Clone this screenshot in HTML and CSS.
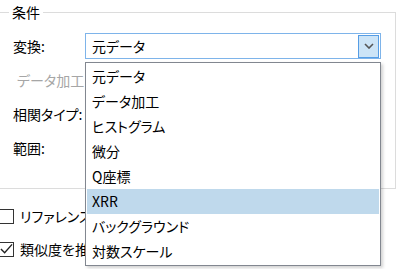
FILE: index.html
```html
<!DOCTYPE html>
<html lang="ja">

<head>
    <meta charset="UTF-8">
    <meta name="viewport" content="width=device-width, initial-scale=1.0">
    <title>条件</title>
    <link rel="stylesheet" href="styles.css">
</head>

<body>
    <div class="panel">
        <fieldset class="group">
            <legend>条件</legend>
            <div class="row">
                <span class="label">変換:</span>
                <div class="combo">
                    <span class="combo-value">元データ</span>
                    <span class="combo-btn">
                        <svg width="10" height="6" viewBox="0 0 10 6">
                            <polyline points="1,1 5,5 9,1" fill="none" stroke="#555" stroke-width="1.6" />
                        </svg>
                    </span>
                </div>
            </div>
            <div class="row">
                <span class="label disabled">データ加工</span>
            </div>
            <div class="row">
                <span class="label">相関タイプ:</span>
            </div>
            <div class="row">
                <span class="label">範囲:</span>
            </div>
        </fieldset>

        <div class="checks">
            <label class="check">
                <span class="box"></span>
                <span>リファレンス</span>
            </label>
            <label class="check">
                <span class="box">
                    <svg width="14" height="12" viewBox="0 0 14 12">
                        <polyline points="1,6 5,10 13,1" fill="none" stroke="#202020" stroke-width="1.5" />
                    </svg>
                </span>
                <span>類似度を推</span>
            </label>
        </div>

        <!-- opened list of the 変換 combo -->
        <ul class="dropdown">
            <li>元データ</li>
            <li>データ加工</li>
            <li>ヒストグラム</li>
            <li>微分</li>
            <li>Q座標</li>
            <li class="selected">XRR</li>
            <li>バックグラウンド</li>
            <li>対数スケール</li>
        </ul>
    </div>
</body>

</html>
```

FILE: styles.css
```css
body {
    margin: 0;
    background-color: #fff;
    font-family: "Noto Sans CJK JP", "Noto Sans", sans-serif;
    font-size: 14px;
    font-feature-settings: "palt";
    color: #000;
    overflow: hidden;
}

.panel {
    position: relative;
    width: 400px;
    height: 269px;
}

.group {
    margin: 2px 0 0 -10px;
    width: 406px;
    box-sizing: border-box;
    border: 1px solid #dcdcdc;
    padding: 11px 0 27px 22px;
}

.group legend {
    margin-left: -4px;
    padding: 0 3px;
    line-height: 20px;
}

.row {
    display: grid;
    grid-template-columns: 72px 296px;
    align-items: center;
    height: 26px;
    margin-bottom: 8px;
}

.row:last-child {
    margin-bottom: 0;
}

.label {
    white-space: nowrap;
}

.disabled {
    color: #a6a6a6;
    padding-left: 4px;
}

.combo {
    height: 26px;
    box-sizing: border-box;
    border: 1px solid #7eb4ea;
    display: flex;
    align-items: center;
    justify-content: space-between;
    padding: 0 1px 0 6px;
}

.combo-btn {
    width: 21px;
    height: 23px;
    box-sizing: border-box;
    background-color: #cce4f7;
    border: 1px solid #569de5;
    display: flex;
    justify-content: center;
    align-items: center;
}

.checks {
    display: flex;
    flex-direction: column;
    gap: 13px;
    margin-top: 17px;
}

.check {
    display: flex;
    align-items: center;
    gap: 6px;
    height: 20px;
    margin-left: -1px;
    white-space: nowrap;
}

.box {
    width: 15px;
    height: 15px;
    box-sizing: border-box;
    border: 1px solid #333;
    display: flex;
    justify-content: center;
    align-items: center;
}

.dropdown {
    position: absolute;
    top: 60px;
    left: 85px;
    width: 296px;
    box-sizing: border-box;
    margin: 0;
    padding: 1px;
    list-style: none;
    background-color: #fff;
    border: 1px solid #828790;
    box-shadow: 2px 2px 3px rgba(0, 0, 0, 0.18);
}

.dropdown li {
    height: 25px;
    line-height: 24px;
    padding-left: 5px;
}

.dropdown .selected {
    background-color: #bfd9ec;
}
```
